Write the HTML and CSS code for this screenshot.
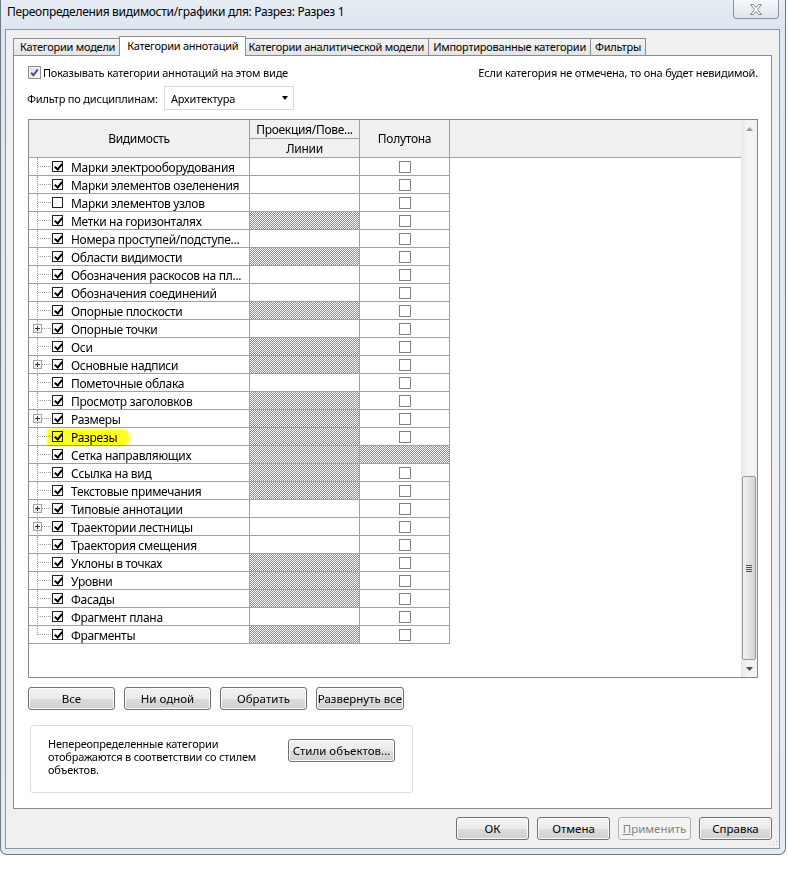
FILE: index.html
```html
<!DOCTYPE html>
<html lang="ru">
<head>
<meta charset="utf-8">
<title>Переопределения видимости/графики</title>
<link rel="stylesheet" href="styles.css">
</head>
<body>
<div class="window">
  <div class="titlebar">Переопределения видимости/графики для: Разрез: Разрез 1</div>
  <div class="close-btn">
    <svg width="14" height="11" viewBox="0 0 14 11"><path d="M1.5 0.5h3l2.5 3 2.5-3h3l-4 5 4 5h-3l-2.5-3-2.5 3h-3l4-5z" fill="#fbfcfd" stroke="#7e8795" stroke-width="1"/></svg>
  </div>
  <div class="client">
    <div class="tabs">
      <div class="tab">Категории модели</div>
      <div class="tab active">Категории аннотаций</div>
      <div class="tab">Категории аналитической модели</div>
      <div class="tab">Импортированные категории</div>
      <div class="tab">Фильтры</div>
    </div>
    <div class="panel">
      <div class="top-row">
        <div class="show-check"><span class="cb7"><svg width="9" height="9" viewBox="0 0 9 9"><path d="M1.2 4.6 L3.4 7.2 L7.8 1.4" fill="none" stroke="#3c4f8c" stroke-width="1.8"/></svg></span>Показывать категории аннотаций на этом виде</div>
        <div class="hint">Если категория не отмечена, то она будет невидимой.</div>
      </div>
      <div class="filter-row">
        <div class="filter-label">Фильтр по дисциплинам:</div>
        <div class="combo"><span>Архитектура</span><span class="combo-arrow"></span></div>
      </div>
      <div class="grid-box">
        <div class="grid">
          <div class="ghead">
            <div class="h-vis">Видимость</div>
            <div class="h-proj"><div class="h-proj-top">Проекция/Пове...</div><div class="h-proj-bot">Линии</div></div>
            <div class="h-half">Полутона</div>
            <div class="h-rest"></div>
          </div>
          <div class="gbody">
            <div class="row"><div class="c-name"><span class="tree"></span><span class="cb on"></span><span class="lbl">Марки электрооборудования</span></div><div class="c-lines"></div><div class="c-half"><span class="hcb"></span></div></div>
            <div class="row"><div class="c-name"><span class="tree"></span><span class="cb on"></span><span class="lbl">Марки элементов озеленения</span></div><div class="c-lines"></div><div class="c-half"><span class="hcb"></span></div></div>
            <div class="row"><div class="c-name"><span class="tree"></span><span class="cb"></span><span class="lbl">Марки элементов узлов</span></div><div class="c-lines"></div><div class="c-half"><span class="hcb"></span></div></div>
            <div class="row"><div class="c-name"><span class="tree"></span><span class="cb on"></span><span class="lbl">Метки на горизонталях</span></div><div class="c-lines hatch"></div><div class="c-half"><span class="hcb"></span></div></div>
            <div class="row"><div class="c-name"><span class="tree"></span><span class="cb on"></span><span class="lbl">Номера проступей/подступе...</span></div><div class="c-lines"></div><div class="c-half"><span class="hcb"></span></div></div>
            <div class="row"><div class="c-name"><span class="tree"></span><span class="cb on"></span><span class="lbl">Области видимости</span></div><div class="c-lines hatch"></div><div class="c-half"><span class="hcb"></span></div></div>
            <div class="row"><div class="c-name"><span class="tree"></span><span class="cb on"></span><span class="lbl">Обозначения раскосов на пл...</span></div><div class="c-lines"></div><div class="c-half"><span class="hcb"></span></div></div>
            <div class="row"><div class="c-name"><span class="tree"></span><span class="cb on"></span><span class="lbl">Обозначения соединений</span></div><div class="c-lines"></div><div class="c-half"><span class="hcb"></span></div></div>
            <div class="row"><div class="c-name"><span class="tree"></span><span class="cb on"></span><span class="lbl">Опорные плоскости</span></div><div class="c-lines hatch"></div><div class="c-half"><span class="hcb"></span></div></div>
            <div class="row"><div class="c-name"><span class="tree"><span class="plus"></span></span><span class="cb on"></span><span class="lbl">Опорные точки</span></div><div class="c-lines"></div><div class="c-half"><span class="hcb"></span></div></div>
            <div class="row"><div class="c-name"><span class="tree"></span><span class="cb on"></span><span class="lbl">Оси</span></div><div class="c-lines hatch"></div><div class="c-half"><span class="hcb"></span></div></div>
            <div class="row"><div class="c-name"><span class="tree"><span class="plus"></span></span><span class="cb on"></span><span class="lbl">Основные надписи</span></div><div class="c-lines hatch"></div><div class="c-half"><span class="hcb"></span></div></div>
            <div class="row"><div class="c-name"><span class="tree"></span><span class="cb on"></span><span class="lbl">Пометочные облака</span></div><div class="c-lines"></div><div class="c-half"><span class="hcb"></span></div></div>
            <div class="row"><div class="c-name"><span class="tree"></span><span class="cb on"></span><span class="lbl">Просмотр заголовков</span></div><div class="c-lines hatch"></div><div class="c-half"><span class="hcb"></span></div></div>
            <div class="row"><div class="c-name"><span class="tree"><span class="plus"></span></span><span class="cb on"></span><span class="lbl">Размеры</span></div><div class="c-lines hatch"></div><div class="c-half"><span class="hcb"></span></div></div>
            <div class="row"><div class="c-name"><span class="tree"></span><span class="cb on"></span><span class="lbl">Разрезы</span><span class="marker"></span></div><div class="c-lines hatch"></div><div class="c-half"><span class="hcb"></span></div></div>
            <div class="row"><div class="c-name"><span class="tree"></span><span class="cb on"></span><span class="lbl">Сетка направляющих</span></div><div class="c-lines hatch"></div><div class="c-half hatch"></div></div>
            <div class="row"><div class="c-name"><span class="tree"></span><span class="cb on"></span><span class="lbl">Ссылка на вид</span></div><div class="c-lines hatch"></div><div class="c-half"><span class="hcb"></span></div></div>
            <div class="row"><div class="c-name"><span class="tree"></span><span class="cb on"></span><span class="lbl">Текстовые примечания</span></div><div class="c-lines hatch"></div><div class="c-half"><span class="hcb"></span></div></div>
            <div class="row"><div class="c-name"><span class="tree"><span class="plus"></span></span><span class="cb on"></span><span class="lbl">Типовые аннотации</span></div><div class="c-lines"></div><div class="c-half"><span class="hcb"></span></div></div>
            <div class="row"><div class="c-name"><span class="tree"><span class="plus"></span></span><span class="cb on"></span><span class="lbl">Траектории лестницы</span></div><div class="c-lines"></div><div class="c-half"><span class="hcb"></span></div></div>
            <div class="row"><div class="c-name"><span class="tree"></span><span class="cb on"></span><span class="lbl">Траектория смещения</span></div><div class="c-lines"></div><div class="c-half"><span class="hcb"></span></div></div>
            <div class="row"><div class="c-name"><span class="tree"></span><span class="cb on"></span><span class="lbl">Уклоны в точках</span></div><div class="c-lines hatch"></div><div class="c-half"><span class="hcb"></span></div></div>
            <div class="row"><div class="c-name"><span class="tree"></span><span class="cb on"></span><span class="lbl">Уровни</span></div><div class="c-lines hatch"></div><div class="c-half"><span class="hcb"></span></div></div>
            <div class="row"><div class="c-name"><span class="tree"></span><span class="cb on"></span><span class="lbl">Фасады</span></div><div class="c-lines hatch"></div><div class="c-half"><span class="hcb"></span></div></div>
            <div class="row"><div class="c-name"><span class="tree"></span><span class="cb on"></span><span class="lbl">Фрагмент плана</span></div><div class="c-lines"></div><div class="c-half"><span class="hcb"></span></div></div>
            <div class="row"><div class="c-name"><span class="tree last"></span><span class="cb on"></span><span class="lbl">Фрагменты</span></div><div class="c-lines hatch"></div><div class="c-half"><span class="hcb"></span></div></div>
          </div>
        </div>
        <div class="vscroll">
          <div class="sb-arrow up"><svg width="7" height="4" viewBox="0 0 7 4"><path d="M0 4L3.5 0L7 4z" fill="#9a9a9a"/></svg></div>
          <div class="sb-track">
            <div class="sb-thumb"><span class="grip"></span></div>
          </div>
          <div class="sb-arrow down"><svg width="7" height="4" viewBox="0 0 7 4"><path d="M0 0L3.5 4L7 0z" fill="#505050"/></svg></div>
        </div>
      </div>
      <div class="btn-row">
        <button class="btn">Все</button>
        <button class="btn">Ни одной</button>
        <button class="btn">Обратить</button>
        <button class="btn wide">Развернуть все</button>
      </div>
      <div class="group">
        <div class="group-text">Непереопределенные категории отображаются в соответствии со стилем объектов.</div>
        <button class="btn styles">Стили объектов...</button>
      </div>
    </div>
    <div class="footer">
      <button class="btn fbtn">ОК</button>
      <button class="btn fbtn">Отмена</button>
      <button class="btn fbtn disabled"><u>П</u>рименить</button>
      <button class="btn fbtn">Справка</button>
    </div>
    <div class="size-grip"></div>
  </div>
</div>
</body>
</html>
```

FILE: styles.css
```css
* { box-sizing: border-box; }
html, body { margin: 0; padding: 0; background: #ffffff; }
body {
  font-family: "Noto Sans", "Open Sans", sans-serif;
  font-size: 11px;
  letter-spacing: -0.2px;
  color: #000;
}

.window {
  position: relative;
  width: 786px;
  height: 855px;
  border: 1px solid #6f7986;
  border-top: 0;
  border-radius: 0 0 7px 7px;
  padding: 0 5px 5px 4px;
  background: linear-gradient(180deg, #e6ecf3 0, #dde6f0 30px, #e4eaf1 100%);
}

.titlebar {
  height: 29px;
  padding: 4px 0 0 2px;
  font-size: 12px;
  letter-spacing: -0.3px;
  line-height: 16px;
  color: #000;
  white-space: nowrap;
}

.close-btn {
  position: absolute;
  top: 0;
  right: 6px;
  width: 46px;
  height: 19px;
  border: 1px solid #8893a2;
  border-top: 0;
  border-radius: 0 0 4px 4px;
  background: linear-gradient(#f5f7fa, #dfe5ed);
  display: flex;
  align-items: center;
  justify-content: center;
}

.client {
  position: relative;
  height: 820px;
  border: 1px solid #8c95a1;
  background: #f0f0f0;
  padding: 6px 7px 0 7px;
}

/* tabs */
.tabs {
  display: flex;
  align-items: flex-end;
  height: 19px;
  position: relative;
  z-index: 2;
}
.tab {
  height: 17px;
  padding: 0 4px;
  border: 1px solid #898c95;
  border-bottom: 0;
  margin-left: -1px;
  background: linear-gradient(#f4f4f4, #e4e4e4);
  line-height: 15px;
  letter-spacing: -0.25px;
  white-space: nowrap;
}
.tab:first-child { margin-left: 0; padding: 0 5px 0 6px; }
.tab.active {
  height: 20px;
  margin-bottom: -1px;
  margin-left: -2px;
  margin-right: -2px;
  padding: 0 7px;
  background: #fff;
  line-height: 17px;
  position: relative;
  z-index: 3;
}

.panel {
  height: 754px;
  border: 1px solid #898c95;
  background: #fff;
  padding: 8px 13px 0 14px;
  position: relative;
  z-index: 1;
}

.top-row {
  height: 16px;
  display: flex;
  align-items: center;
  justify-content: space-between;
}
.show-check {
  display: flex;
  align-items: center;
  white-space: nowrap;
}
.cb7 {
  width: 13px;
  height: 13px;
  margin-right: 2px;
  border: 1px solid #8f8f8f;
  background: linear-gradient(135deg, #dcdcdc, #fbfbfb);
  box-shadow: inset 0 0 0 1px #f4f4f4;
  display: flex;
  align-items: center;
  justify-content: center;
}
.hint { white-space: nowrap; }

.filter-row {
  margin-top: 6px;
  height: 24px;
  display: flex;
  align-items: center;
}
.filter-label {
  width: 137px;
  margin-left: -1px;
  white-space: nowrap;
}
.combo {
  width: 130px;
  height: 24px;
  border: 1px solid #d9d9d9;
  background: #fff;
  display: flex;
  align-items: center;
  justify-content: space-between;
  padding: 0 5px 0 6px;
}
.combo-arrow {
  width: 0;
  height: 0;
  border-left: 3.5px solid transparent;
  border-right: 3.5px solid transparent;
  border-top: 4px solid #000;
}

/* grid */
.grid-box {
  margin-top: 9px;
  height: 559px;
  border: 1px solid #828790;
  display: flex;
  background: #fff;
}
.grid {
  width: 712px;
  font-size: 12px;
  letter-spacing: -0.3px;
}
.ghead {
  display: flex;
  height: 38px;
  background: #f0f0f0;
  border-bottom: 1px solid #a0a0a0;
  text-align: center;
  padding-top: 1px;
}
.h-vis {
  width: 221px;
  margin-top: -1px;
  border-right: 1px solid #a0a0a0;
  display: flex;
  align-items: center;
  justify-content: center;
}
.h-proj {
  width: 110px;
  margin-top: -1px;
  border-right: 1px solid #a0a0a0;
  display: flex;
  flex-direction: column;
}
.h-proj-top {
  height: 19px;
  border-bottom: 1px solid #a0a0a0;
  line-height: 19px;
  white-space: nowrap;
}
.h-proj-bot {
  height: 18px;
  line-height: 19px;
}
.h-half {
  width: 90px;
  margin-top: -1px;
  border-right: 1px solid #a0a0a0;
  display: flex;
  align-items: center;
  justify-content: center;
}
.h-rest { flex: 1; }

.row {
  display: flex;
  height: 18px;
}
.c-name, .c-lines, .c-half {
  border-bottom: 1px solid #a0a0a0;
  border-right: 1px solid #a0a0a0;
  height: 18px;
}
.c-name {
  width: 221px;
  display: flex;
  align-items: center;
  position: relative;
  white-space: nowrap;
  padding-top: 1px;
}
.c-lines { width: 110px; }
.c-half {
  width: 90px;
  display: flex;
  align-items: center;
  justify-content: center;
}
.hatch {
  background-color: #fff;
  background-image: repeating-conic-gradient(#8a8a8a 0 25%, #ffffff 0 50%);
  background-size: 2px 2px;
}

.tree {
  width: 23px;
  height: 18px;
  margin-top: -1px;
  margin-bottom: -1px;
  position: relative;
  flex: none;
}
.tree::before {
  content: "";
  position: absolute;
  left: 8px;
  top: 0;
  bottom: 0;
  border-left: 1px dotted #a0a0a0;
}
.tree.last::before { bottom: 9px; }
.tree::after {
  content: "";
  position: absolute;
  left: 9px;
  width: 13px;
  top: 8px;
  border-top: 1px dotted #a0a0a0;
}
.plus {
  position: absolute;
  left: 4px;
  top: 4px;
  width: 9px;
  height: 9px;
  border: 1px solid #a3a3a3;
  background: linear-gradient(#ffffff, #ebebeb);
  z-index: 1;
}
.plus::before {
  content: "";
  position: absolute;
  left: 1px;
  top: 3px;
  width: 5px;
  height: 1px;
  background: #333;
}
.plus::after {
  content: "";
  position: absolute;
  left: 3px;
  top: 1px;
  width: 1px;
  height: 5px;
  background: #333;
}

.cb {
  width: 11px;
  height: 11px;
  margin-top: -1px;
  border: 1px solid #222;
  background: #fff;
  position: relative;
  flex: none;
}
.cb.on::after {
  content: "";
  position: absolute;
  left: 2.5px;
  top: 0px;
  width: 3px;
  height: 6px;
  border: solid #000;
  border-width: 0 2px 2px 0;
  transform: rotate(40deg);
}
.lbl {
  margin-left: 8px;
}
.marker {
  position: absolute;
  left: 18px;
  top: 1px;
  width: 83px;
  height: 17px;
  background: #ffff20;
  mix-blend-mode: multiply;
  border-radius: 3px 8px 8px 3px;
  filter: blur(0.8px);
}

.hcb {
  width: 12px;
  height: 12px;
  border: 1px solid #808080;
  background: #fff;
  margin-left: 1px;
}

/* scrollbar */
.vscroll {
  width: 16px;
  display: flex;
  flex-direction: column;
  background: linear-gradient(90deg, #e6e6e6, #f4f4f4 40%, #f0f0f0);
}
.sb-arrow {
  height: 17px;
  display: flex;
  align-items: center;
  justify-content: center;
}
.sb-track {
  flex: 1;
  display: flex;
  flex-direction: column;
  justify-content: flex-end;
}
.sb-thumb {
  height: 184px;
  margin: 0 1px;
  border: 1px solid #9a9a9a;
  border-radius: 2px;
  background: linear-gradient(90deg, #f2f2f2, #e4e4e6 50%, #d2d2d6);
  display: flex;
  align-items: center;
  justify-content: center;
}
.grip {
  width: 6px;
  height: 7px;
  background: repeating-linear-gradient(#555 0 1px, transparent 1px 2px);
}

/* buttons */
.btn {
  font: inherit;
  font-size: 11.5px;
  color: #000;
  height: 23px;
  border: 1px solid #707070;
  border-radius: 3px;
  background: linear-gradient(#f2f2f2 0, #ebebeb 50%, #dddddd 51%, #cfcfcf 100%);
  box-shadow: inset 0 0 0 1px #fbfbfb;
  padding: 0;
  white-space: nowrap;
}
.btn-row {
  margin-top: 9px;
  display: flex;
  gap: 9px;
}
.btn-row .btn { width: 87px; }
.btn-row .btn.wide { width: 88px; }

.group {
  margin: 15px 0 0 2px;
  width: 383px;
  height: 68px;
  border: 1px solid #d5dfe5;
  border-radius: 3px;
  display: flex;
  align-items: flex-start;
  padding: 11px 17px 0 17px;
}
.group-text {
  width: 225px;
  line-height: 13px;
}
.btn.styles {
  margin-left: auto;
  margin-top: 2px;
  width: 107px;
}

.footer {
  margin-top: 8px;
  display: flex;
  justify-content: flex-end;
  gap: 8px;
}
.fbtn { width: 73px; }
.btn.disabled {
  border-color: #adb2b5;
  color: #838383;
  background: #f4f4f4;
  box-shadow: none;
}
.btn u { text-decoration: underline; }

.size-grip {
  position: absolute;
  right: 1px;
  bottom: 2px;
  width: 9px;
  height: 9px;
  background-image: radial-gradient(circle, #b9b9b9 0.8px, transparent 1px);
  background-size: 3px 3px;
  clip-path: polygon(100% 0, 100% 100%, 0 100%);
}
```
